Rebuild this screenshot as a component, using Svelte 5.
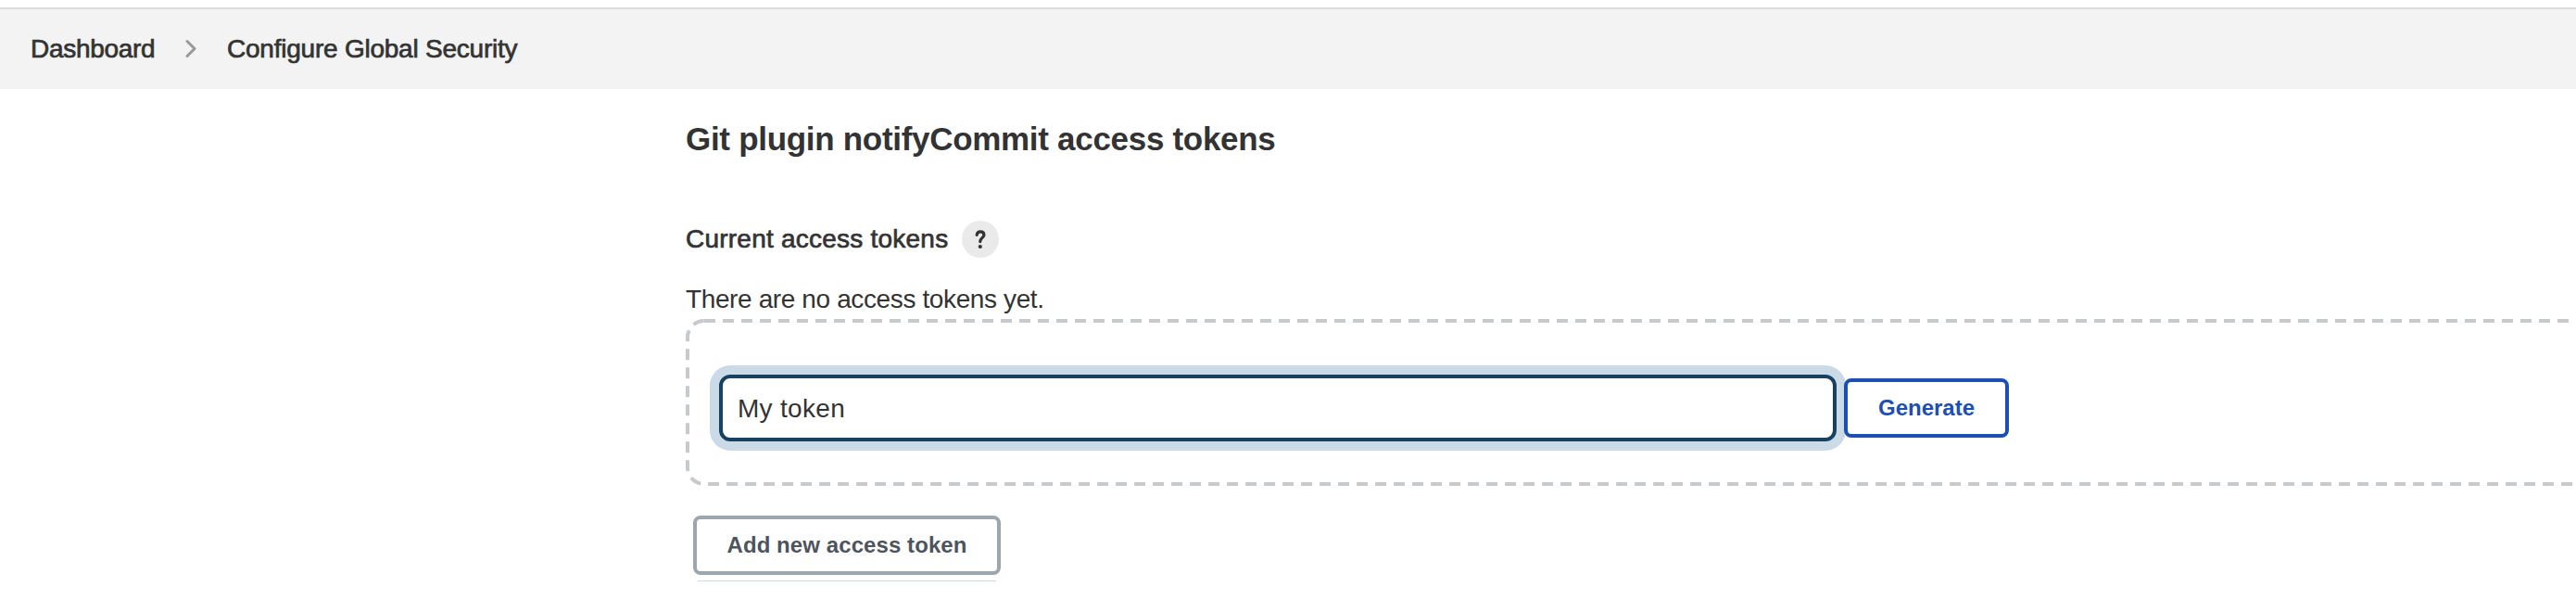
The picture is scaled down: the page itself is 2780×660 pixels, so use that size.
<script lang="ts">
  const breadcrumbs = ['Dashboard', 'Configure Global Security'];

  let tokenName = 'My token';
</script>

<div class="page">
  <nav class="breadcrumbs">
    {#each breadcrumbs as crumb, i}
      {#if i > 0}
        <svg class="chevron" width="14" height="22" viewBox="0 0 14 22">
          <path d="M2 2.5 L10 10.5 L2 18.5" />
        </svg>
      {/if}
      <a href="#top" class="crumb crumb-{i}">{crumb}</a>
    {/each}
  </nav>

  <main>
    <h2>Git plugin notifyCommit access tokens</h2>

    <div class="label-row">
      <span class="label">Current access tokens</span>
      <button class="help" aria-label="Help">
        <svg width="40" height="40" viewBox="0 0 40 40">
          <path d="M16.2 15.4 C16.5 13.1 17.9 11.9 20 11.9 C22.3 11.9 23.9 13.3 23.9 15.4 C23.9 18.4 19.8 18.6 19.8 22.6" />
          <circle cx="19.8" cy="28" r="2.1" />
        </svg>
      </button>
    </div>

    <p class="empty">There are no access tokens yet.</p>

    <div class="token-box">
      <!-- dashed frame, runs past the right edge of the window -->
      <svg class="frame" width="2100" height="180">
        <path d="M20 2 H2100" />
        <path stroke-dashoffset="-0.3" d="M20 2 A18 18 0 0 0 2 20 V160 A18 18 0 0 0 20 178 H2100" />
      </svg>
      <input type="text" aria-label="Token name" bind:value={tokenName} />
      <button class="btn generate">Generate</button>
    </div>

    <button class="btn add">Add new access token</button>
  </main>
</div>

<style>
  :global(body) {
    background: #fff;
    overflow: hidden;
  }
  .page {
    box-sizing: border-box;
    height: 660px;
    padding-top: 8px;
    overflow: hidden;
    font-family: "Liberation Sans", Arial, sans-serif;
    font-size: 28px;
    color: #333;
    background: #fff;
  }
  .breadcrumbs {
    display: flex;
    align-items: center;
    height: 86px;
    padding-left: 33px;
    border-top: 2px solid #dcdcdc;
    background: #f3f3f3;
  }
  .crumb {
    color: #333;
    text-decoration: none;
    white-space: nowrap;
    line-height: 32px;
    -webkit-text-stroke: 0.7px #333;
  }
  .crumb-0 {
    width: 136px;
    letter-spacing: -0.3px;
  }
  .crumb-1 {
    letter-spacing: -0.23px;
  }
  .chevron {
    margin: 0 31px;
    fill: none;
    stroke: #999;
    stroke-width: 3;
    stroke-linecap: round;
    stroke-linejoin: round;
  }
  main {
    padding-left: 740px;
  }
  h2 {
    margin: 33px 0 0;
    font-size: 35px;
    line-height: 42px;
    letter-spacing: -0.3px;
    white-space: nowrap;
  }
  .label-row {
    display: flex;
    align-items: center;
    height: 40px;
    margin-top: 67px;
  }
  .label {
    width: 298px;
    letter-spacing: 0.23px;
    white-space: nowrap;
    -webkit-text-stroke: 0.7px #333;
  }
  .help {
    width: 40px;
    height: 40px;
    padding: 0;
    border: none;
    border-radius: 50%;
    background: #eaeaea;
  }
  .help svg {
    display: block;
  }
  .help path {
    fill: none;
    stroke: #333;
    stroke-width: 3.2;
    stroke-linecap: round;
  }
  .help circle {
    fill: #333;
  }
  .empty {
    margin: 29px 0 0;
    height: 37px;
    line-height: 32px;
    letter-spacing: -0.38px;
    white-space: nowrap;
  }
  .token-box {
    position: relative;
    display: flex;
    align-items: center;
    box-sizing: border-box;
    height: 180px;
    padding: 20px 0 8px 36px;
    gap: 8px;
  }
  .frame {
    position: absolute;
    left: 0;
    top: 0;
    fill: none;
    stroke: #c4cacd;
    stroke-width: 4;
    stroke-dasharray: 12 8;
    pointer-events: none;
  }
  input {
    box-sizing: border-box;
    width: 1206px;
    height: 72px;
    padding: 2px 16px 0;
    border: 4px solid #18405f;
    border-radius: 12px;
    outline: none;
    box-shadow: 0 0 0 10px #cbdae7;
    background: #fff;
    color: #333;
    font: inherit;
    letter-spacing: 0.3px;
  }
  .btn {
    position: relative;
    box-sizing: border-box;
    height: 64px;
    padding: 0;
    border: 4px solid;
    border-radius: 8px;
    background: #fff;
    font: bold 24px/32px "Liberation Sans", Arial, sans-serif;
    white-space: nowrap;
  }
  .generate {
    width: 178px;
    border-color: #1b4fb4;
    color: #1b4fb4;
  }
  .add {
    display: block;
    width: 332px;
    margin: 32px 0 0 8px;
    border-color: #9ba6ad;
    color: #4d545d;
    letter-spacing: 0.08px;
  }
  .add::after {
    content: "";
    position: absolute;
    left: 1px;
    right: 1px;
    top: 66px;
    height: 1px;
    background: #cbdae7;
  }
</style>
